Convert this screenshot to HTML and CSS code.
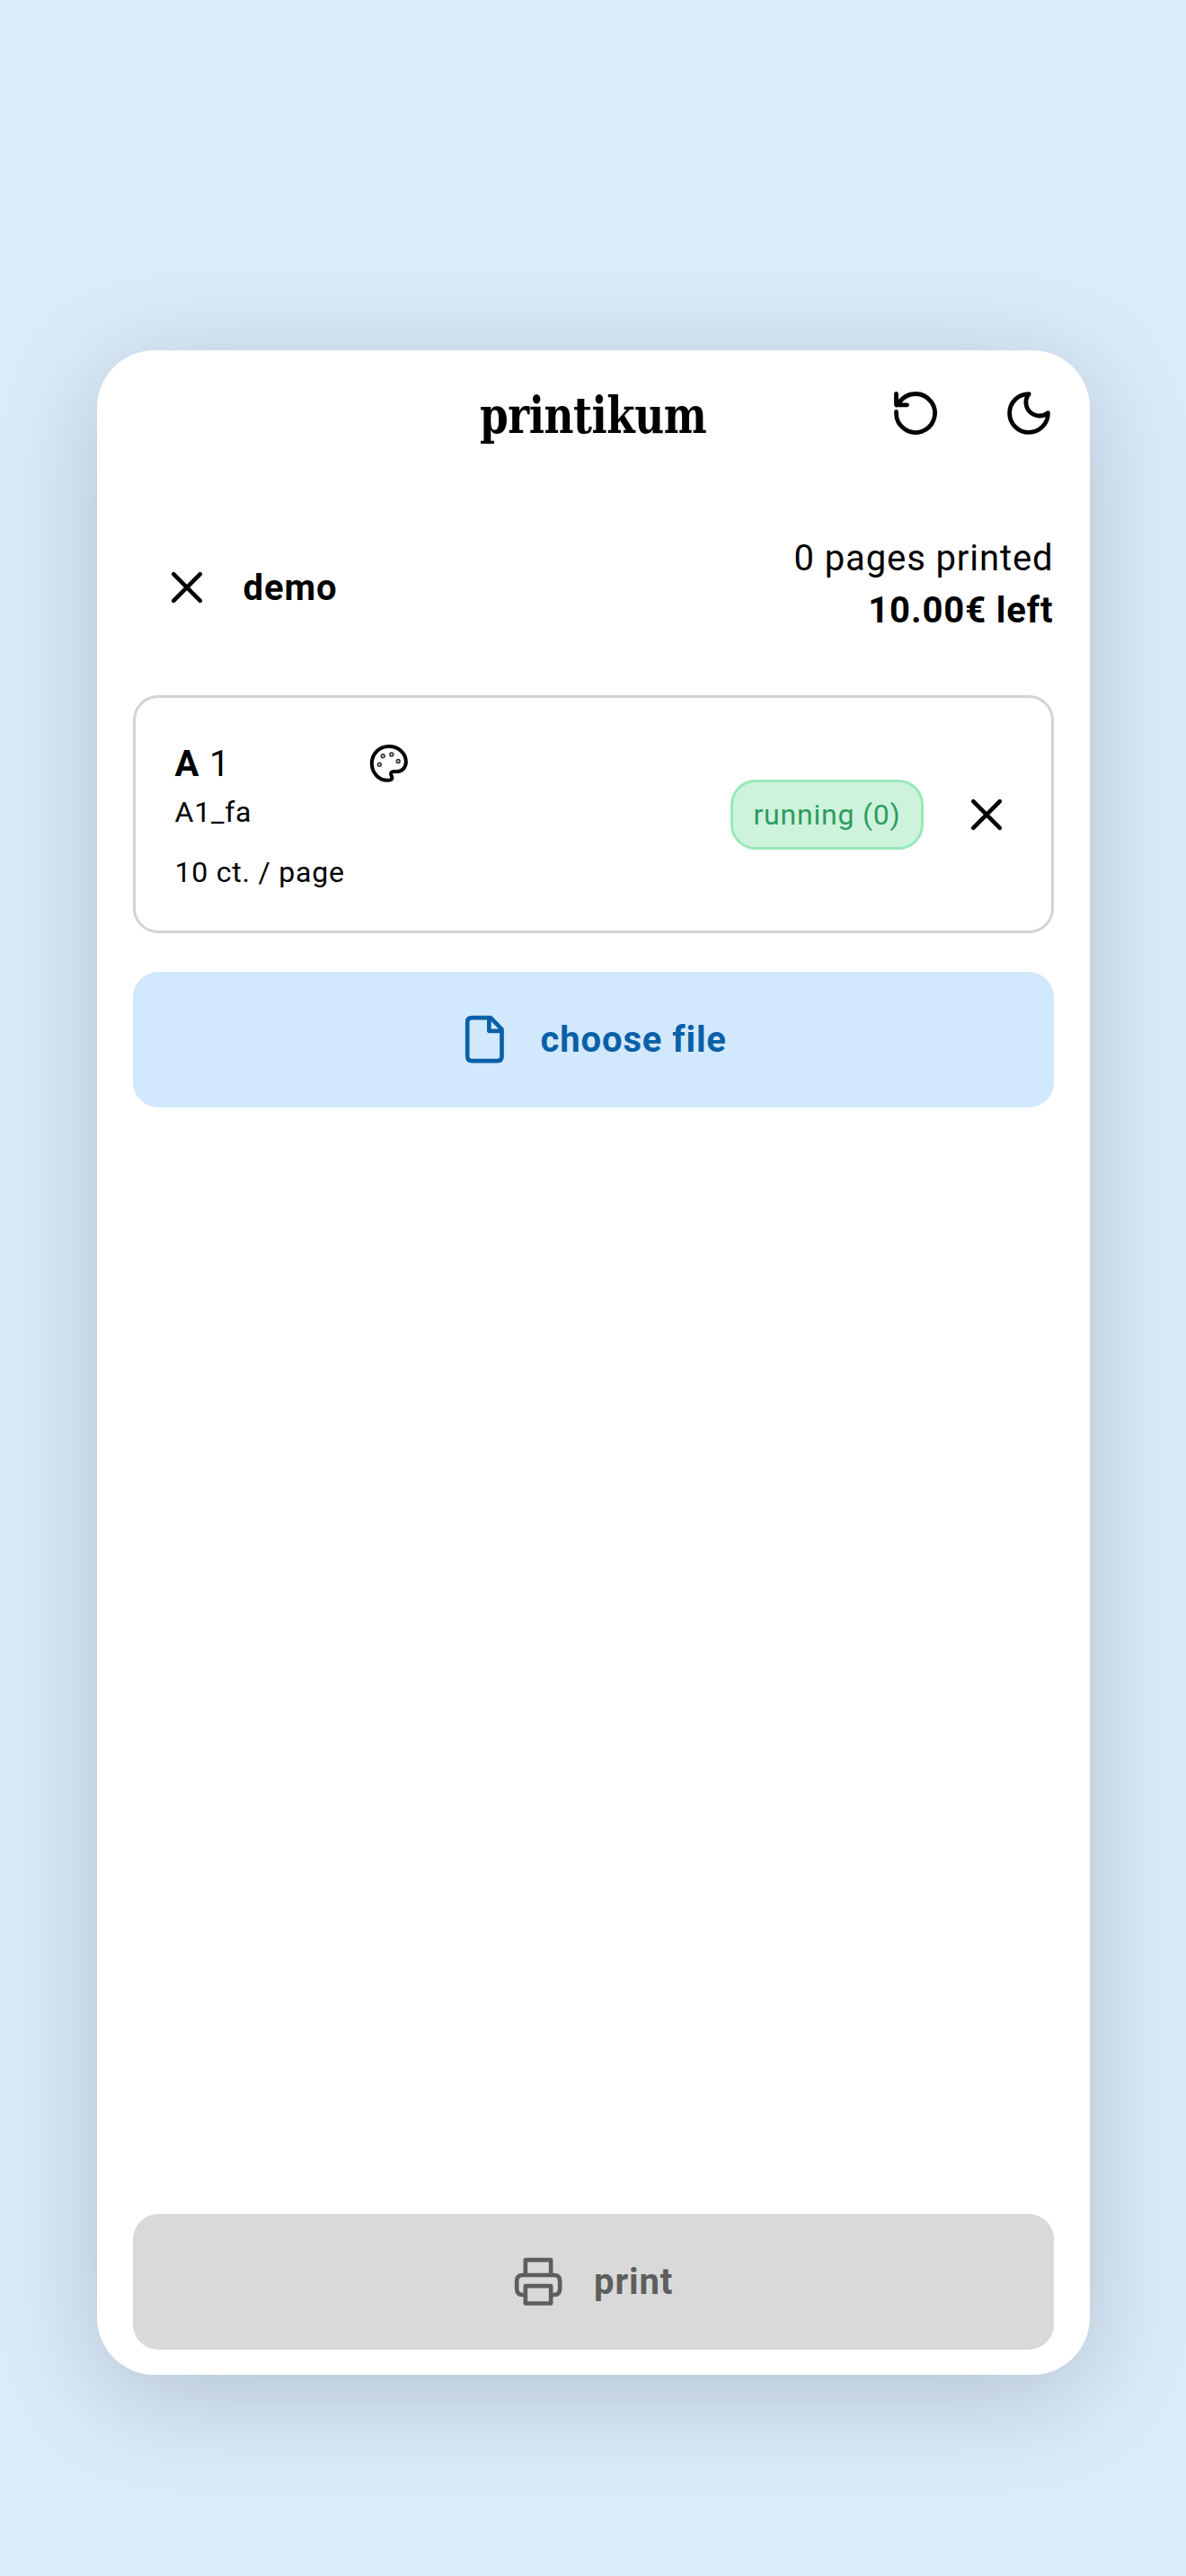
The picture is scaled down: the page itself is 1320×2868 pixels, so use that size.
FILE: index.html
```html
<!DOCTYPE html>
<html lang="en">
<head>
<meta charset="utf-8">
<title>printikum</title>
<link rel="stylesheet" href="styles.css">
</head>
<body>
<main class="panel">
  <header class="header">
    <h1 class="logo">printikum</h1>
    <div class="actions">
      <button class="icon-button" aria-label="Reset">
        <svg class="icon-action" viewBox="0 0 48 48"><path d="M2.5 22.5v1.500a21.5 21.5 0 1 0 4-12.5L2.8 15M2.5 2.5V14.8H14.5M3 14.500L7 10"/></svg>
      </button>
      <button class="icon-button" aria-label="Dark mode">
        <svg class="icon-action" viewBox="0 0 48 48"><path d="M24.2 2.6A21.4 21.4 0 1 0 45.4 23.6A15 15 0 0 1 24.2 2.6Z"/></svg>
      </button>
    </div>
  </header>
  <section class="account">
    <div class="user">
      <svg class="icon-close" viewBox="0 0 34 34"><path d="M2.2 2.2L31.8 31.8M31.8 2.2L2.2 31.8"/></svg>
      <strong class="user-name">demo</strong>
    </div>
    <div class="balance">
      <span>0 pages printed</span>
      <strong>10.00€ left</strong>
    </div>
  </section>
  <section class="printer">
    <div class="printer-info">
      <div class="printer-title">
        <span class="printer-name"><b>A</b> 1</span>
        <svg class="icon-palette" viewBox="0 0 125 125">
          <path d="M62 6C94 6 119.500 28 119.500 58C119.500 78 105 90 88 90H77C69 91 67 97 71 104C76 114 72 119.500 59 119.500C28 119.500 5.500 94 5.500 63C5.500 31 30 6 62 6Z"/>
          <g class="palette-dots"><circle cx="31" cy="66.500" r="5.500"/><circle cx="42.500" cy="38" r="5.500"/><circle cx="71.500" cy="33" r="5.500"/><circle cx="93.500" cy="55.500" r="5.500"/></g>
        </svg>
      </div>
      <div class="printer-id">A1_fa</div>
      <div class="printer-price">10 ct. / page</div>
    </div>
    <span class="status">running (0)</span>
    <svg class="icon-close" viewBox="0 0 34 34"><path d="M2.2 2.2L31.8 31.8M31.8 2.2L2.2 31.8"/></svg>
  </section>
  <button class="button button-choose">
    <svg class="icon-file" viewBox="0 0 128 157"><path d="M22 6.500H84L121.500 45V136Q121.500 150.500 107 150.500H22Q6.500 150.500 6.500 136V21Q6.500 6.500 22 6.500ZM79 7V50.500H121"/></svg>
    <span>choose file</span>
  </button>
  <button class="button button-print" disabled>
    <svg class="icon-print" viewBox="0 0 157 158"><path d="M35.500 57V6.500H120.500V57M35.500 123H26Q6.500 123 6.500 103V77Q6.500 57 26 57H131Q150.500 57 150.500 77V103Q150.500 123 131 123H120.500M35.500 93.500H120.500V151.500H35.500Z"/></svg>
    <span>print</span>
  </button>
</main>
</body>
</html>
```
FILE: styles.css
```css
* {
  box-sizing: border-box;
}

body {
  margin: 0;
  height: 2868px;
  padding: 390px 107.5px 224px;
  background: #dbebfa;
  color: #000;
  font-family: Roboto, sans-serif;
  font-size: 40px;
  letter-spacing: 0.9px;
}

svg {
  display: block;
  flex: none;
  overflow: visible;
  fill: none;
  stroke: currentColor;
  stroke-linecap: round;
  stroke-linejoin: round;
}

button {
  padding: 0;
  border: 0;
  background: none;
  color: inherit;
  font: inherit;
  letter-spacing: inherit;
}

.panel {
  display: flex;
  flex-direction: column;
  height: 2254px;
  padding: 0 40px 28px;
  border-radius: 64px;
  background: #fff;
  box-shadow: 0 22px 118px rgba(0, 0, 0, 0.18);
}

.header {
  display: grid;
  grid-template-columns: 1fr auto 1fr;
  align-items: center;
  height: 140px;
}

.logo {
  grid-column: 2;
  margin: 4px 0 0;
  font-family: "DejaVu Serif Condensed", "DejaVu Serif", serif;
  font-stretch: condensed;
  font-size: 56px;
  font-weight: 700;
  letter-spacing: -0.5px;
  transform: scaleX(0.9);
}

.actions {
  display: flex;
  justify-content: flex-end;
  gap: 78px;
  padding-right: 4px;
}

.icon-action {
  width: 48px;
  height: 48px;
  stroke-width: 4.8;
}

.icon-close {
  width: 34px;
  height: 34px;
  stroke-width: 4.6;
}

.account {
  display: flex;
  justify-content: space-between;
  align-items: center;
  height: 244px;
  padding: 4px 0 0 43px;
}

.user {
  display: flex;
  align-items: center;
  gap: 46px;
}

.balance {
  display: flex;
  flex-direction: column;
  align-items: flex-end;
  margin-bottom: 6px;
  line-height: 58px;
}

.printer {
  display: flex;
  align-items: center;
  height: 265px;
  padding: 0 55px 0 44px;
  border: 3px solid #d3d3d3;
  border-radius: 28px;
}

.printer-info {
  flex: 1;
  padding-top: 8px;
  font-size: 32px;
  letter-spacing: 0.8px;
}

.printer-title {
  display: flex;
  align-items: center;
  justify-content: space-between;
  width: 259px;
  height: 54px;
  font-size: 40px;
}

.icon-palette {
  width: 41.7px;
  height: 41.7px;
  stroke-width: 12;
}

.palette-dots {
  stroke: #333;
  stroke-width: 5;
}

.printer-id {
  line-height: 54px;
}

.printer-price {
  margin-top: 13px;
  line-height: 54px;
}

.status {
  height: 78px;
  margin: 1px 53px 0 0;
  padding: 0 22px;
  border: 3px solid #98e9b9;
  border-radius: 28px;
  background: #cef3dd;
  color: #2f9c5e;
  font-size: 32px;
  letter-spacing: 0.8px;
  line-height: 73px;
}

.button {
  display: flex;
  align-items: center;
  justify-content: center;
  gap: 36px;
  height: 151px;
  padding-left: 2px;
  border-radius: 28px;
  font-weight: 700;
}

.button-choose {
  margin-top: 43px;
  background: #d2e8fd;
  color: #0a60a8;
}

.icon-file {
  width: 42.7px;
  height: 52.3px;
  margin: 0 4.8px;
  stroke-width: 14;
}

.button-print {
  margin-top: auto;
  background: #d9d9d9;
  color: #5e5e5e;
}

.icon-print {
  width: 52.3px;
  height: 52.7px;
  stroke-width: 14;
}
```
